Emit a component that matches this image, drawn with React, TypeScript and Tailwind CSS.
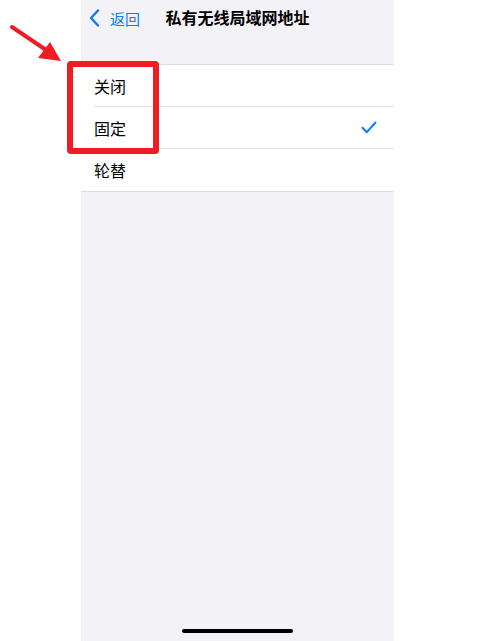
import React from "react";

const font = { fontFamily: '"Noto Sans CJK SC", "Noto Sans", sans-serif' };

function Row({ label, checked, last }: { label: string; checked?: boolean; last?: boolean }) {
  return (
    <div className="pl-[13px] bg-white">
      <div className={`h-[42px] flex items-center justify-between pr-[17px] ${last ? "" : "border-b border-[#e3e3e7]"}`}>
        <span className="text-[16px] text-black leading-none">{label}</span>
        {checked && (
          <svg width="16" height="13" viewBox="0 0 16 13" fill="none">
            <path d="M1.5 6.8 L5.8 11.2 L14.5 1.5" stroke="#0a7aff" strokeWidth="2" strokeLinecap="round" strokeLinejoin="round" />
          </svg>
        )}
      </div>
    </div>
  );
}

export default function App() {
  return (
    <div className="relative w-[494px] h-[641px] flex bg-white overflow-hidden" style={font}>
      <div className="w-[81px] bg-white" />
      <div className="w-[313px] bg-[#f2f2f7] flex flex-col">
        <div className="relative h-[34px] flex items-center">
          <div className="absolute left-[8px] top-[9px] flex items-center gap-[10px]">
            <svg width="11" height="18" viewBox="0 0 11 18" fill="none">
              <path d="M9 1.5 L2 9 L9 16.5" stroke="#0a7aff" strokeWidth="2.4" strokeLinecap="round" strokeLinejoin="round" />
            </svg>
            <span className="text-[15px] text-[#0a7aff] leading-none">返回</span>
          </div>
          <div className="w-full text-center text-[16px] font-bold text-black leading-none">私有无线局域网地址</div>
        </div>
        <div className="h-[30px]" />
        <div className="border-t border-b border-[#dedee2] bg-white">
          <Row label="关闭" />
          <Row label="固定" checked />
          <Row label="轮替" last />
        </div>
        <div className="flex-1" />
        <div className="h-[12px] flex justify-center">
          <div className="w-[111px] h-[4px] rounded-full bg-black" />
        </div>
      </div>
      <div className="flex-1 bg-white" />

      {/* red highlight box */}
      <div className="absolute left-[67px] top-[61px] w-[92px] h-[93px] border-[6px] border-[#ee1c25] rounded-[4px]" />
      {/* red arrow */}
      <svg className="absolute left-0 top-0" width="80" height="80" viewBox="0 0 80 80" fill="none">
        <line x1="12" y1="27" x2="52" y2="54" stroke="#ee1c25" strokeWidth="4" strokeLinecap="round" />
        <polygon points="61,61 50,42 38,58" fill="#ee1c25" />
      </svg>
    </div>
  );
}
